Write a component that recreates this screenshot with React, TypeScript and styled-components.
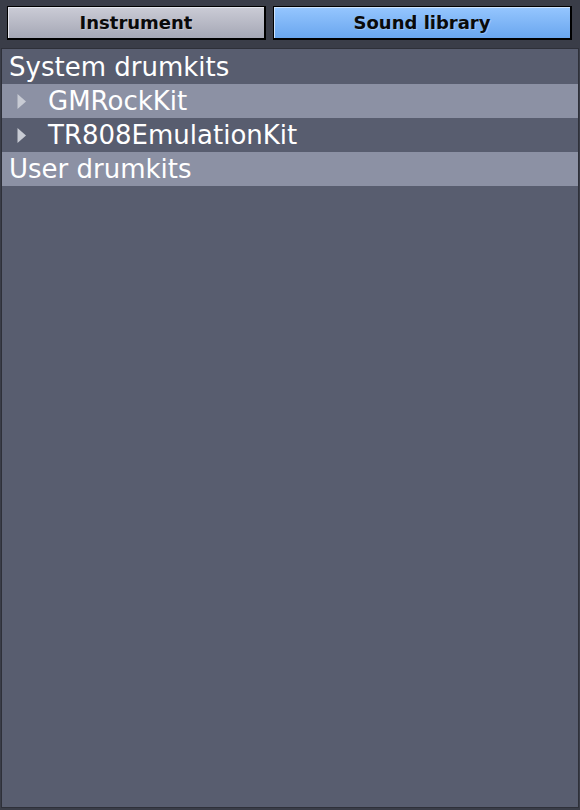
import React from "react";
import styled, { createGlobalStyle } from "styled-components";

const Global = createGlobalStyle`
  html, body { margin: 0; padding: 0; background: #3a3d48; }
  body { width: 580px; height: 810px; overflow: hidden; font-family: "DejaVu Sans", sans-serif; }
`;

const Page = styled.div`
  width: 580px;
  height: 810px;
  box-sizing: border-box;
  background: #3a3d48;
  display: flex;
  flex-direction: column;
`;

const Tabs = styled.div`
  display: grid;
  grid-template-columns: 259px 299px;
  column-gap: 7px;
  padding: 6px 0 0 7px;
  height: 48px;
  box-sizing: border-box;
  flex: none;
`;

const TabButton = styled.div<{ $active?: boolean }>`
  height: 34px;
  box-sizing: border-box;
  border: 1px solid #000;
  border-right-width: 2px;
  border-bottom-width: 2px;
  background: ${(p) =>
    p.$active
      ? "linear-gradient(#95c6ff, #6aa6ee)"
      : "linear-gradient(#cbccd6, #a5a7b5)"};
  box-shadow: inset 1px 1px 0 ${(p) => (p.$active ? "#cfe4ff" : "#e6e7ee")};
  display: flex;
  align-items: center;
  justify-content: center;
  font-family: "DejaVu Sans", sans-serif;
  font-weight: bold;
  font-size: 18px;
  color: #0a0a0a;
  text-shadow: 1px 1px 0 rgba(255, 255, 255, 0.25);
`;

const Panel = styled.div`
  flex: 1;
  margin: 0 1px 2px 1px;
  border: 1px solid #2e3039;
  background: #585d6f;
  padding-top: 1px;
  display: flex;
  flex-direction: column;
`;

const Row = styled.div<{ $hl?: boolean; $child?: boolean }>`
  height: 34px;
  display: flex;
  align-items: center;
  background: ${(p) => (p.$hl ? "#8c91a4" : "transparent")};
  padding-left: ${(p) => (p.$child ? "15px" : "7px")};
  font-family: "DejaVu Sans", sans-serif;
  font-size: 26px;
  color: #ffffff;
  white-space: nowrap;
`;

const Arrow = styled.svg`
  width: 9px;
  height: 15px;
  margin-right: 22px;
  flex: none;
`;

const Tri = () => (
  <Arrow viewBox="0 0 9 15">
    <path d="M0.5 0 L9 7.5 L0.5 15 Z" fill="#c8cbd4" />
  </Arrow>
);

export default function App() {
  return (
    <Page>
      <Global />
      <Tabs>
        <TabButton>Instrument</TabButton>
        <TabButton $active>Sound library</TabButton>
      </Tabs>
      <Panel>
        <Row>System drumkits</Row>
        <Row $hl $child>
          <Tri />
          GMRockKit
        </Row>
        <Row $child>
          <Tri />
          TR808EmulationKit
        </Row>
        <Row $hl>User drumkits</Row>
      </Panel>
    </Page>
  );
}
